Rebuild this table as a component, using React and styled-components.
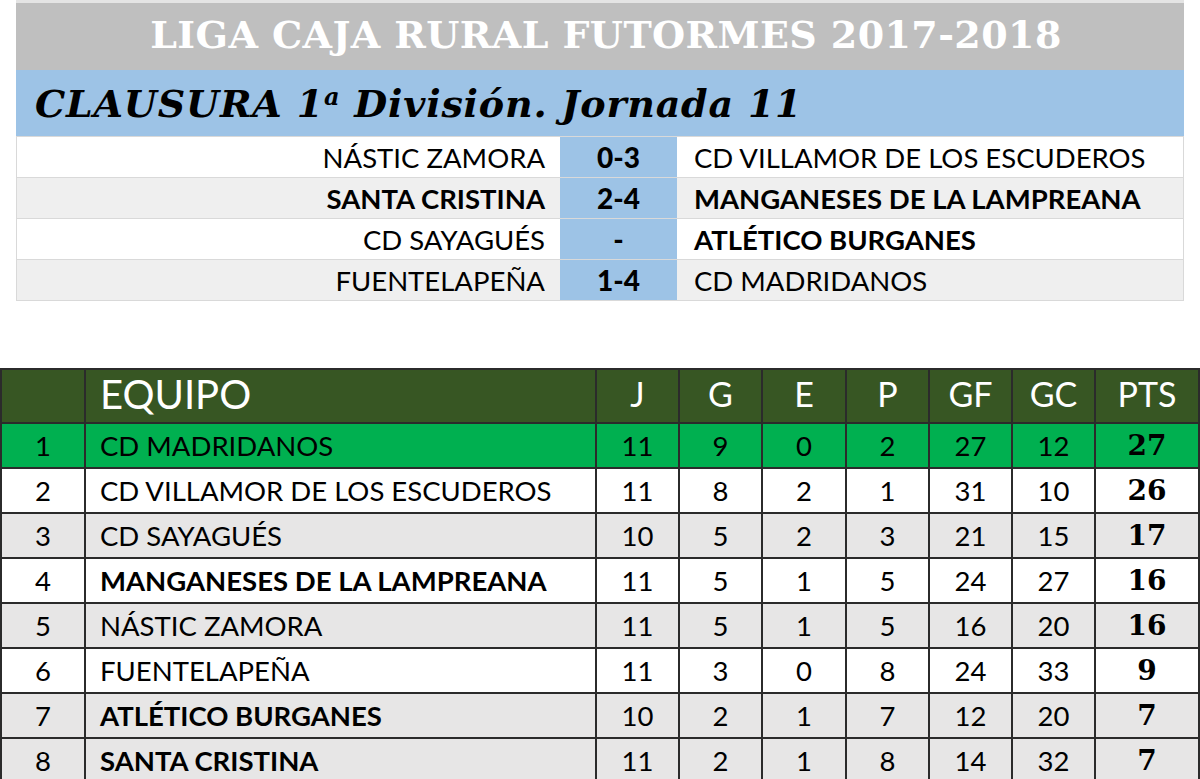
import styled, { createGlobalStyle } from 'styled-components';

const Global = createGlobalStyle`
    body {
        margin: 0;
        background: #ffffff;
        font-family: 'Lato', 'Liberation Sans', sans-serif;
    }
`;

const partidos = [
    { local: "NÁSTIC ZAMORA", res: "0-3", visitante: "CD VILLAMOR DE LOS ESCUDEROS", boldL: false, boldV: false },
    { local: "SANTA CRISTINA", res: "2-4", visitante: "MANGANESES DE LA LAMPREANA", boldL: true, boldV: true },
    { local: "CD SAYAGUÉS", res: "-", visitante: "ATLÉTICO BURGANES", boldL: false, boldV: true },
    { local: "FUENTELAPEÑA", res: "1-4", visitante: "CD MADRIDANOS", boldL: false, boldV: false },
];

const clasificacion = [
    { equipo: "CD MADRIDANOS", j: 11, g: 9, e: 0, p: 2, gf: 27, gc: 12, pts: 27, bold: false, bg: "#00b050" },
    { equipo: "CD VILLAMOR DE LOS ESCUDEROS", j: 11, g: 8, e: 2, p: 1, gf: 31, gc: 10, pts: 26, bold: false, bg: "#ffffff" },
    { equipo: "CD SAYAGUÉS", j: 10, g: 5, e: 2, p: 3, gf: 21, gc: 15, pts: 17, bold: false, bg: "#e7e6e6" },
    { equipo: "MANGANESES DE LA LAMPREANA", j: 11, g: 5, e: 1, p: 5, gf: 24, gc: 27, pts: 16, bold: true, bg: "#ffffff" },
    { equipo: "NÁSTIC ZAMORA", j: 11, g: 5, e: 1, p: 5, gf: 16, gc: 20, pts: 16, bold: false, bg: "#e7e6e6" },
    { equipo: "FUENTELAPEÑA", j: 11, g: 3, e: 0, p: 8, gf: 24, gc: 33, pts: 9, bold: false, bg: "#ffffff" },
    { equipo: "ATLÉTICO BURGANES", j: 10, g: 2, e: 1, p: 7, gf: 12, gc: 20, pts: 7, bold: true, bg: "#e7e6e6" },
    { equipo: "SANTA CRISTINA", j: 11, g: 2, e: 1, p: 8, gf: 14, gc: 32, pts: 7, bold: true, bg: "#e7e6e6" },
];

export default function App() {
    return (
        <Pagina>
            <Global />
            <Jornada>
                <Titulo>LIGA CAJA RURAL FUTORMES 2017-2018</Titulo>
                <Subtitulo>CLAUSURA 1<sup>a</sup> División. Jornada 11</Subtitulo>
                {partidos.map((item, index) => (
                    <Partido key={index} $fondo={index % 2 === 0 ? "#ffffff" : "#efefef"}>
                        <Local $bold={item.boldL}>{item.local}</Local>
                        <Resultado>{item.res}</Resultado>
                        <Visitante $bold={item.boldV}>{item.visitante}</Visitante>
                    </Partido>
                ))}
            </Jornada>
            <Tabla>
                <colgroup>
                    <col style={{ width: 84 }} />
                    <col style={{ width: 511 }} />
                    <col style={{ width: 83 }} />
                    <col style={{ width: 83 }} />
                    <col style={{ width: 84 }} />
                    <col style={{ width: 83 }} />
                    <col style={{ width: 83 }} />
                    <col style={{ width: 83 }} />
                    <col />
                </colgroup>
                <thead>
                    <tr>
                        <Cabecera></Cabecera>
                        <Cabecera $left>EQUIPO</Cabecera>
                        <Cabecera>J</Cabecera>
                        <Cabecera>G</Cabecera>
                        <Cabecera>E</Cabecera>
                        <Cabecera>P</Cabecera>
                        <Cabecera>GF</Cabecera>
                        <Cabecera>GC</Cabecera>
                        <Cabecera>PTS</Cabecera>
                    </tr>
                </thead>
                <tbody>
                    {clasificacion.map((item, index) => (
                        <Fila key={index} $fondo={item.bg}>
                            <Celda>{index + 1}</Celda>
                            <Equipo $bold={item.bold}>{item.equipo}</Equipo>
                            <Celda>{item.j}</Celda>
                            <Celda>{item.g}</Celda>
                            <Celda>{item.e}</Celda>
                            <Celda>{item.p}</Celda>
                            <Celda>{item.gf}</Celda>
                            <Celda>{item.gc}</Celda>
                            <Puntos>{item.pts}</Puntos>
                        </Fila>
                    ))}
                </tbody>
            </Tabla>
        </Pagina>
    );
}

const Pagina = styled.div`
    width: 1200px;
    height: 779px;
    overflow: hidden;
    display: flex;
    flex-direction: column;
`;

const Jornada = styled.div`
    margin: 0 16px;
    border-top: 3px solid #e4e4e4;
    display: flex;
    flex-direction: column;
`;

const Titulo = styled.div`
    height: 67px;
    padding: 0 0 4px 12px;
    box-sizing: border-box;
    background: #bfbfbf;
    color: #ffffff;
    display: flex;
    align-items: center;
    justify-content: center;
    font-family: 'DejaVu Serif', serif;
    font-weight: 700;
    font-size: 38px;
    letter-spacing: 0.4px;
`;

const Subtitulo = styled.div`
    height: 66px;
    background: #9dc3e6;
    color: #000000;
    display: flex;
    align-items: center;
    padding-left: 19px;
    font-family: 'DejaVu Serif', serif;
    font-style: italic;
    font-weight: 700;
    font-size: 38px;
    letter-spacing: 0.8px;
    white-space: pre;
    sup {
        font-size: 24px;
        line-height: 0;
        position: relative;
        top: -6px;
    }
`;

const Partido = styled.div`
    display: grid;
    grid-template-columns: 543px 117px 1fr;
    height: 40px;
    background: ${props => props.$fondo};
    border-top: 1px solid #d9d9d9;
    border-left: 1px solid #d9d9d9;
    border-right: 1px solid #d9d9d9;
    &:last-child {
        border-bottom: 1px solid #d9d9d9;
    }
    font-size: 27.5px;
    color: #000000;
`;

const Local = styled.div`
    display: flex;
    align-items: center;
    justify-content: flex-end;
    padding-right: 15px;
    font-weight: ${props => props.$bold ? 700 : 400};
`;

const Resultado = styled.div`
    display: flex;
    align-items: center;
    justify-content: center;
    background: #9dc3e6;
    font-weight: 900;
    font-size: 28px;
`;

const Visitante = styled.div`
    display: flex;
    align-items: center;
    padding-left: 17px;
    font-weight: ${props => props.$bold ? 700 : 400};
`;

const Tabla = styled.table`
    margin-top: 67px;
    width: 1200px;
    border-collapse: collapse;
    table-layout: fixed;
    font-size: 27.5px;
    color: #000000;
`;

const Cabecera = styled.th`
    height: 48px;
    padding: 0 0 4px 0;
    background: #375623;
    color: #ffffff;
    font-weight: 400;
    font-size: ${props => props.$left ? "40px" : "34px"};
    line-height: 1;
    text-align: ${props => props.$left ? "left" : "center"};
    padding-left: ${props => props.$left ? "14px" : "0"};
    border: 2px solid #2b2b2b;
`;

const Fila = styled.tr`
    height: 45px;
    background: ${props => props.$fondo};
`;

const Celda = styled.td`
    padding: 0;
    text-align: center;
    border: 2px solid #2b2b2b;
`;

const Equipo = styled.td`
    padding: 0 0 0 14px;
    border: 2px solid #2b2b2b;
    font-weight: ${props => props.$bold ? 700 : 400};
    white-space: nowrap;
`;

const Puntos = styled.td`
    padding: 0;
    text-align: center;
    border: 2px solid #2b2b2b;
    font-family: 'DejaVu Serif', serif;
    font-weight: 700;
    font-size: 28px;
`;
